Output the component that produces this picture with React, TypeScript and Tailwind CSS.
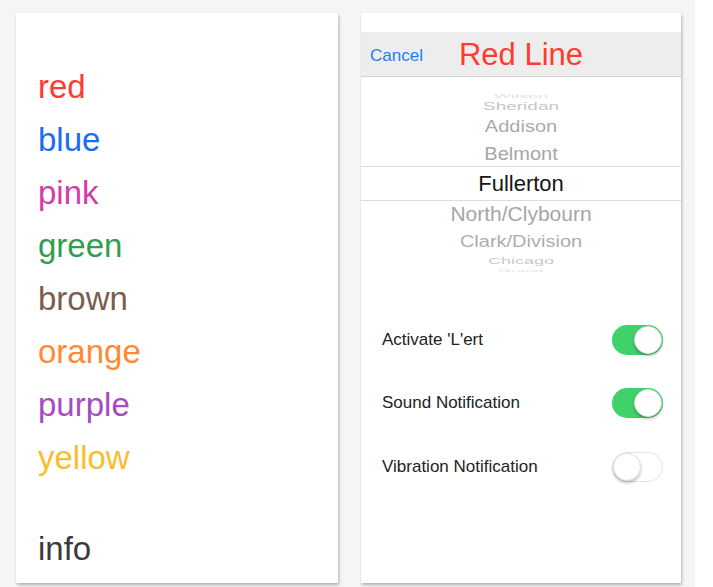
const lines = [
  { name: 'red', color: 'text-[#ff3b30]' },
  { name: 'blue', color: 'text-[#1a6cf2]' },
  { name: 'pink', color: 'text-[#d33caa]' },
  { name: 'green', color: 'text-[#2f9e4e]' },
  { name: 'brown', color: 'text-[#7a5e4c]' },
  { name: 'orange', color: 'text-[#ff8a33]' },
  { name: 'purple', color: 'text-[#a64bc3]' },
  { name: 'yellow', color: 'text-[#fbbd2e]' },
];

function Toggle({ on }: { on: boolean }) {
  return (
    <div
      className={
        on
          ? 'flex h-[30px] w-[51px] items-center justify-end rounded-full bg-[#3fd26b] px-[1px]'
          : 'flex h-[30px] w-[51px] items-center justify-start rounded-full border border-[#e4e4e4] bg-white'
      }
    >
      <div className="h-[28px] w-[28px] rounded-full border border-[#e0e0e0] bg-white shadow-[0_2px_3px_rgba(0,0,0,0.25)]" />
    </div>
  );
}

function SettingRow({ label, on, h }: { label: string; on: boolean; h: string }) {
  return (
    <div className={`flex items-center justify-between pl-[21px] pr-[18px] ${h}`}>
      <span className="text-[17px] text-[#222]">{label}</span>
      <Toggle on={on} />
    </div>
  );
}

export default function App() {
  return (
    <div className="flex h-[587px] w-[713px] bg-white font-['Liberation_Sans',Arial,sans-serif]">
      <div className="flex h-full w-[695px] gap-[23px] bg-[#f5f5f5] pl-[16px] pt-[13px]">
        {/* line list */}
        <div className="flex h-[570px] w-[322px] flex-col bg-white pl-[22px] pt-[47px] shadow-[1px_2px_3px_rgba(0,0,0,0.28)]">
          {lines.map((l) => (
            <div key={l.name} className={`h-[53px] text-[33px] leading-[53px] ${l.color}`}>
              {l.name}
            </div>
          ))}
          <div className="mt-[38px] h-[53px] text-[33px] leading-[53px] text-[#3a3a3a]">info</div>
        </div>

        {/* line settings */}
        <div className="flex h-[570px] w-[320px] flex-col bg-white pt-[19px] shadow-[1px_2px_3px_rgba(0,0,0,0.28)]">
          <div className="grid h-[45px] grid-cols-[1fr_auto_1fr] items-center border-b border-[#d2d2d2] bg-[#ededed]">
            <span className="pl-[9px] text-[17px] text-[#1a7efb]">Cancel</span>
            <span className="text-[31px] text-[#ff3b30]">Red Line</span>
            <span />
          </div>

          {/* station picker */}
          <div className="flex flex-col pt-[14px] text-center">
            <div className="flex h-[10px] items-center justify-center">
              <span className="inline-block scale-y-[0.3] text-[18px] text-[#e2e2e2]">Wilson</span>
            </div>
            <div className="flex h-[12px] items-center justify-center">
              <span className="inline-block scale-y-[0.55] text-[19px] text-[#c6c6c6]">Sheridan</span>
            </div>
            <div className="flex h-[26px] items-center justify-center">
              <span className="inline-block scale-y-[0.8] text-[20px] text-[#ababab]">Addison</span>
            </div>
            <div className="flex h-[27px] items-center justify-center">
              <span className="inline-block scale-y-[0.93] text-[20px] text-[#a6a6a6]">Belmont</span>
            </div>
            <div className="flex h-[35px] items-center justify-center border-y border-[#dcdcdc]">
              <span className="text-[22px] text-[#151515]">Fullerton</span>
            </div>
            <div className="flex h-[28px] items-center justify-center">
              <span className="inline-block scale-y-[0.93] text-[21px] text-[#a6a6a6]">North/Clybourn</span>
            </div>
            <div className="flex h-[25px] items-center justify-center">
              <span className="inline-block scale-y-[0.78] text-[20px] text-[#adadad]">Clark/Division</span>
            </div>
            <div className="flex h-[15px] items-center justify-center">
              <span className="inline-block scale-y-[0.5] text-[18px] text-[#c8c8c8]">Chicago</span>
            </div>
            <div className="flex h-[3px] items-center justify-center">
              <span className="inline-block scale-y-[0.2] text-[16px] text-[#e4e4e4]">Grand</span>
            </div>
          </div>

          <div className="flex flex-col pt-[37px]">
            <SettingRow label="Activate 'L'ert" on h="h-[62px]" />
            <SettingRow label="Sound Notification" on h="h-[63px]" />
            <SettingRow label="Vibration Notification" on={false} h="h-[66px]" />
          </div>
        </div>
      </div>
    </div>
  );
}
